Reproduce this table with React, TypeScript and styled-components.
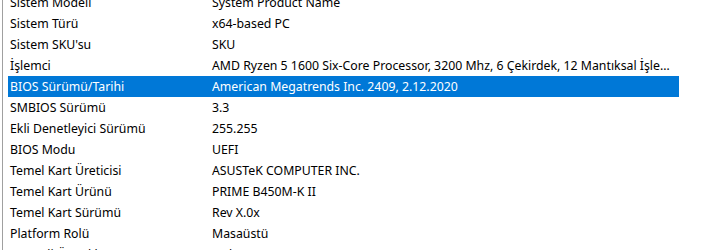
import React from "react";
import styled, { createGlobalStyle } from "styled-components";

const GlobalStyle = createGlobalStyle`
  html, body {
    margin: 0;
    padding: 0;
    background: #ffffff;
    overflow: hidden;
  }
  body {
    font-family: "Noto Sans", "Open Sans", "Liberation Sans", sans-serif;
    font-size: 12.3px;
    color: #000000;
  }
`;

const Window = styled.div`
  display: flex;
  width: 721px;
  height: 250px;
  overflow: hidden;
  background: #ffffff;
`;

const Divider = styled.div`
  width: 1px;
  margin-left: 2px;
  background: #a0a0a0;
  flex-shrink: 0;
`;

const List = styled.div`
  display: flex;
  flex-direction: column;
  margin-top: -8px;
  padding-left: 5px;
`;

const Row = styled.div<{ $selected?: boolean }>`
  display: grid;
  grid-template-columns: 202px 469px;
  height: 21px;
  align-items: center;
  background: ${(p) => (p.$selected ? "#0078d7" : "transparent")};
  color: ${(p) => (p.$selected ? "#ffffff" : "#000000")};
`;

const Cell = styled.span`
  padding: 0 9px 0 2px;
  white-space: nowrap;
  overflow: hidden;
  text-overflow: ellipsis;
  line-height: 21px;
`;

const rows: [string, string][] = [
  ["Sistem Modeli", "System Product Name"],
  ["Sistem Türü", "x64-based PC"],
  ["Sistem SKU'su", "SKU"],
  ["İşlemci", "AMD Ryzen 5 1600 Six-Core Processor, 3200 Mhz, 6 Çekirdek, 12 Mantıksal İşlemci"],
  ["BIOS Sürümü/Tarihi", "American Megatrends Inc. 2409, 2.12.2020"],
  ["SMBIOS Sürümü", "3.3"],
  ["Ekli Denetleyici Sürümü", "255.255"],
  ["BIOS Modu", "UEFI"],
  ["Temel Kart Üreticisi", "ASUSTeK COMPUTER INC."],
  ["Temel Kart Ürünü", "PRIME B450M-K II"],
  ["Temel Kart Sürümü", "Rev X.0x"],
  ["Platform Rolü", "Masaüstü"],
  ["Güvenli Önyükleme Durumu", "Açık"],
];

export default function App() {
  return (
    <>
      <GlobalStyle />
      <Window>
        <Divider />
        <List>
          {rows.map(([label, value], i) => (
            <Row key={label} $selected={i === 4}>
              <Cell>{label}</Cell>
              <Cell>{value}</Cell>
            </Row>
          ))}
        </List>
      </Window>
    </>
  );
}
